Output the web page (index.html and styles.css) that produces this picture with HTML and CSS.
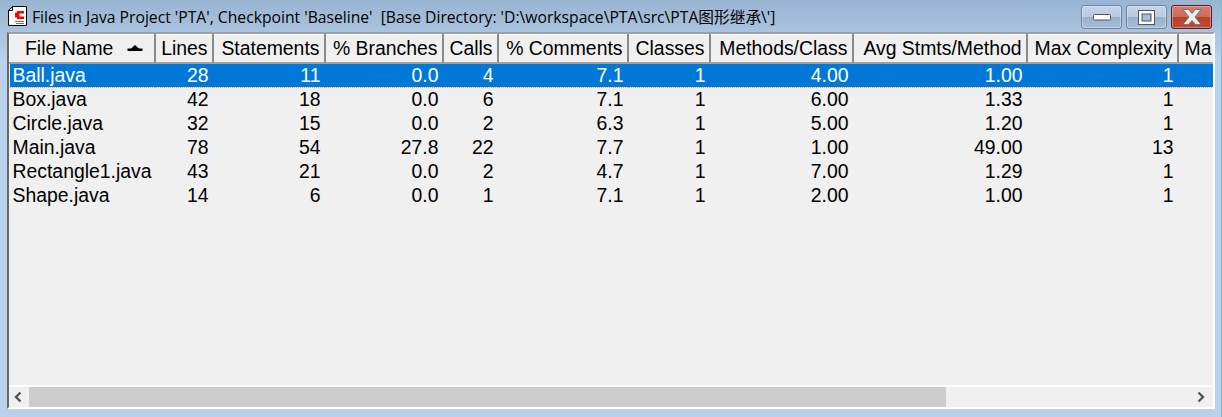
FILE: index.html
```html
<!DOCTYPE html>
<html lang="en">
<head>
<meta charset="utf-8">
<title>Files in Java Project</title>
<link rel="stylesheet" href="styles.css">
</head>
<body>
<div class="window">
  <div class="titlebar">
    <svg class="appicon" width="20" height="20" viewBox="0 0 20 20">
      <path d="M5.5 .5H19.5V19.5H1.5V4.5Z" fill="#fff" stroke="#000"/>
      <path d="M1.5 4.5H5.5V.5Z" fill="#ddd" stroke="#000"/>
      <path d="M10 5H17V7.5H12.5V10.5H17V13H10V11.5H8V6.5H10Z" fill="#f00"/>
      <path d="M8 15.5H17M9 17.5H17" stroke="#777"/>
    </svg>
    <div class="title">Files in Java Project 'PTA', Checkpoint 'Baseline'&nbsp; [Base Directory: 'D:\workspace\PTA\src\PTA图形继承\']</div>
    <div class="controls">
      <div class="btn"><svg width="18" height="7" viewBox="0 0 18 7"><rect x=".5" y=".5" width="17" height="5.5" rx="1" fill="#fff" stroke="#555"/></svg></div>
      <div class="btn"><svg width="17" height="15" viewBox="0 0 17 15"><rect x=".5" y=".5" width="16" height="14" fill="#fff" stroke="#555"/><rect x="4" y="4" width="9" height="7" fill="#a8bdd6" stroke="#555"/></svg></div>
      <div class="btn close"><svg width="20" height="16" viewBox="0 0 20 16"><path d="M1 .5H6.5L10 4.5L13.5 .5H19L13 8L19 15.5H13.5L10 11.5L6.5 15.5H1L7 8Z" fill="#eee" stroke="#777"/></svg></div>
    </div>
  </div>
  <div class="client">
    <div class="list">
      <table class="grid">
        <colgroup>
          <col class="c1"><col class="c2"><col class="c3"><col class="c4"><col class="c5"><col class="c6"><col class="c7"><col class="c8"><col class="c9"><col class="c10"><col class="c11">
        </colgroup>
        <thead>
          <tr>
            <th class="first">File Name<svg class="sort" width="16" height="7" viewBox="0 0 16 7"><path d="M8 0L12 3.5H15.5V6H.5V3.5H4Z" fill="#000"/></svg></th>
            <th>Lines</th><th>Statements</th><th>% Branches</th><th>Calls</th><th>% Comments</th><th>Classes</th><th>Methods/Class</th><th>Avg Stmts/Method</th><th>Max Complexity</th><th class="cut">Ma</th>
          </tr>
        </thead>
        <tbody>
          <tr class="sel"><td>Ball.java</td><td>28</td><td>11</td><td>0.0</td><td>4</td><td>7.1</td><td>1</td><td>4.00</td><td>1.00</td><td>1</td><td></td></tr>
          <tr><td>Box.java</td><td>42</td><td>18</td><td>0.0</td><td>6</td><td>7.1</td><td>1</td><td>6.00</td><td>1.33</td><td>1</td><td></td></tr>
          <tr><td>Circle.java</td><td>32</td><td>15</td><td>0.0</td><td>2</td><td>6.3</td><td>1</td><td>5.00</td><td>1.20</td><td>1</td><td></td></tr>
          <tr><td>Main.java</td><td>78</td><td>54</td><td>27.8</td><td>22</td><td>7.7</td><td>1</td><td>1.00</td><td>49.00</td><td>13</td><td></td></tr>
          <tr><td>Rectangle1.java</td><td>43</td><td>21</td><td>0.0</td><td>2</td><td>4.7</td><td>1</td><td>7.00</td><td>1.29</td><td>1</td><td></td></tr>
          <tr><td>Shape.java</td><td>14</td><td>6</td><td>0.0</td><td>1</td><td>7.1</td><td>1</td><td>2.00</td><td>1.00</td><td>1</td><td></td></tr>
        </tbody>
      </table>
    </div>
    <div class="scrollbar">
      <div class="arrow"><svg width="10" height="12" viewBox="0 0 10 12"><path d="M6.5 1.5L2 6L6.5 10.5" fill="none" stroke="#555" stroke-width="2.4"/></svg></div>
      <div class="track"><div class="thumb"></div></div>
      <div class="arrow end"><svg width="10" height="12" viewBox="0 0 10 12"><path d="M2.5 1.5L7 6L2.5 10.5" fill="none" stroke="#555" stroke-width="2.4"/></svg></div>
    </div>
  </div>
</div>
</body>
</html>
```
FILE: styles.css
```css
html, body { margin: 0; padding: 0; height: 100%; overflow: hidden; }
body { background: #b9d1ea; font-family: "Liberation Sans", "Noto Sans CJK SC", sans-serif; color: #000; }
.window {
  width: 1222px; height: 417px; box-sizing: border-box; padding: 0 6px 8px 7px;
  display: flex; flex-direction: column;
  border-right: 1px solid #62c6e8;
  background: linear-gradient(to bottom, #99b4d1 0, #b9d1ea 60px);
}
.titlebar { height: 32px; flex: none; display: flex; align-items: flex-start; }
.appicon { margin-top: 6px; flex: none; }
.title { font-family: "Open Sans", "Noto Sans CJK SC", sans-serif; font-size: 15.7px; line-height: 20px; margin: 7px 0 0 5px; flex: 1; white-space: nowrap; color: #000; }
.controls { display: flex; gap: 4px; margin-top: 5px; margin-right: 3px; }
.btn {
  width: 41px; height: 24px; box-sizing: border-box; border: 1px solid #6f839c; border-radius: 3px;
  background: linear-gradient(to bottom, #c3d5ea 0, #b7cbe2 48%, #99b1cc 52%, #a6bdd6 100%);
  display: flex; align-items: center; justify-content: center;
  box-shadow: inset 0 0 0 1px rgba(255,255,255,.35);
}
.btn.close {
  border-color: #5a1a22;
  background: linear-gradient(to bottom, #d9796b 0, #cf6d5d 48%, #b8412c 52%, #c04a33 100%);
}
.client {
  flex: 1; min-height: 0; display: flex; flex-direction: column; background: #f0f0f0;
  border-top: 2px solid #a0a0a0; border-left: 2px solid #696969;
  border-right: 2px solid #fff; border-bottom: 2px solid #fff;
}
.list { flex: 1; min-height: 0; overflow: hidden; border-bottom: 2px solid #fff; }
.grid { table-layout: fixed; border-collapse: collapse; width: 1212px; font-size: 19.4px; }
.c1 { width: 145px; } .c2 { width: 58px; } .c3 { width: 112px; } .c4 { width: 118px; }
.c5 { width: 55px; } .c6 { width: 130px; } .c7 { width: 82px; } .c8 { width: 143px; }
.c9 { width: 174px; } .c10 { width: 151px; } .c11 { width: 44px; }
th {
  height: 28px; padding: 0 4px 0 0; font-weight: normal; text-align: right; white-space: nowrap; overflow: hidden;
  background: #f0f0f0; border-top: 1px solid #fff; border-left: 1px solid #fff;
  border-right: 2px solid #8a8a8a; border-bottom: 2px solid #a0a0a0;
  box-sizing: border-box;
}
th.first { text-align: left; padding-left: 15px; position: relative; }
th.cut { text-align: left; padding-left: 6px; border-right: 0; }
.sort { position: absolute; left: 117px; top: 10px; }
td { height: 24px; padding: 0 4px 0 0; text-align: right; white-space: nowrap; overflow: hidden; box-sizing: border-box; }
td:first-child { text-align: left; padding-left: 3px; }
.sel td { background: #0078d7; color: #fff; border-top: 1px dotted #f5a35c; border-bottom: 1px dotted #f5a35c; }
.scrollbar { height: 20px; flex: none; display: flex; background: #f0f0f0; }
.arrow { width: 20px; flex: none; display: flex; align-items: center; justify-content: center; }
.arrow.end { width: 24px; }
.track { flex: 1; min-width: 0; }
.thumb { width: 917px; height: 20px; background: #cdcdcd; }
```
